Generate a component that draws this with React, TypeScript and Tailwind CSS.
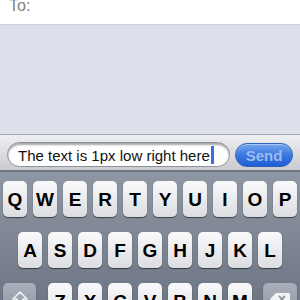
import React from "react";

const row1 = ["Q", "W", "E", "R", "T", "Y", "U", "I", "O", "P"];
const row2 = ["A", "S", "D", "F", "G", "H", "J", "K", "L"];
const row3 = ["Z", "X", "C", "V", "B", "N", "M"];

function Key({ k }: { k: string }) {
  return (
    <div className="w-[24px] h-[36px] shrink-0 rounded-[5px] bg-gradient-to-b from-[#fafafb] to-[#dcdde1] shadow-[0_1px_1px_rgba(0,0,0,0.55)] flex items-center justify-center text-[19px] font-bold text-black leading-none">
      {k}
    </div>
  );
}

export default function App() {
  return (
    <div
      className="w-[300px] h-[300px] overflow-hidden flex flex-col bg-white"
      style={{ fontFamily: '"Liberation Sans", Arial, sans-serif' }}
    >
      <div className="h-[25px] shrink-0 bg-white border-b border-[#cfd3dc] pl-[9px] overflow-hidden">
        <div className="text-[16px] leading-[16px] text-[#808080] mt-[-2px]">To:</div>
      </div>
      <div className="h-[109px] shrink-0 bg-[#dbe0eb]" />
      <div className="h-[38px] shrink-0 border-t border-[#a7abb2] bg-gradient-to-b from-[#eeeff1] to-[#c9cbd0] border-b-2 border-b-[#6f7684] flex items-start pt-[7px] pl-[7px] gap-[5px]">
        <div className="w-[223px] h-[25px] rounded-full bg-white border border-[#8e9299] shadow-[inset_0_2px_2px_rgba(0,0,0,0.35)] flex items-center pl-[10px]">
          <span className="text-[15px] leading-none text-[#111] mt-[1px]">The text is 1px low right here</span>
          <span className="w-[3px] h-[18px] bg-[#3a6ee8] ml-[1px]" />
        </div>
        <div className="w-[58px] h-[24px] mt-[1px] rounded-full border border-[#2d5fb8] bg-gradient-to-b from-[#77a6ef] via-[#3a77e0] to-[#1f5fd6] flex items-center justify-center shadow-[inset_0_1px_0_rgba(255,255,255,0.4)]">
          <span className="text-[15px] font-bold text-[#9ebcee] leading-none">Send</span>
        </div>
      </div>
      <div className="flex-1 bg-gradient-to-b from-[#8f97a4] to-[#6a7281] pt-[9px] flex flex-col gap-[15px]">
        <div className="flex gap-[6px] pl-[3px]">
          {row1.map((k) => (
            <Key key={k} k={k} />
          ))}
        </div>
        <div className="flex gap-[6px] pl-[18px]">
          {row2.map((k) => (
            <Key key={k} k={k} />
          ))}
        </div>
        <div className="flex pl-[3px]">
          <div className="w-[33px] h-[36px] shrink-0 rounded-[5px] bg-gradient-to-b from-[#a9b0bb] to-[#8b93a1] shadow-[0_1px_1px_rgba(0,0,0,0.55)] flex justify-center pt-[8px]">
            <svg width="16" height="14" viewBox="0 0 16 14">
              <path d="M8 1 L15 8 H11 V13 H5 V8 H1 Z" fill="none" stroke="#f2f3f5" strokeWidth="1.5" strokeLinejoin="round" />
            </svg>
          </div>
          <div className="flex gap-[6px] ml-[12px]">
            {row3.map((k) => (
              <Key key={k} k={k} />
            ))}
          </div>
          <div className="w-[34px] h-[36px] shrink-0 ml-[11px] rounded-[5px] bg-gradient-to-b from-[#a9b0bb] to-[#8b93a1] shadow-[0_1px_1px_rgba(0,0,0,0.55)] flex justify-center pt-[9px]">
            <svg width="22" height="14" viewBox="0 0 22 14">
              <path d="M7 1 H20 a1 1 0 0 1 1 1 V12 a1 1 0 0 1 -1 1 H7 L1 7 Z" fill="#f2f3f5" />
              <path d="M10 4 L16 10 M16 4 L10 10" stroke="#8f97a4" strokeWidth="1.8" />
            </svg>
          </div>
        </div>
      </div>
    </div>
  );
}
